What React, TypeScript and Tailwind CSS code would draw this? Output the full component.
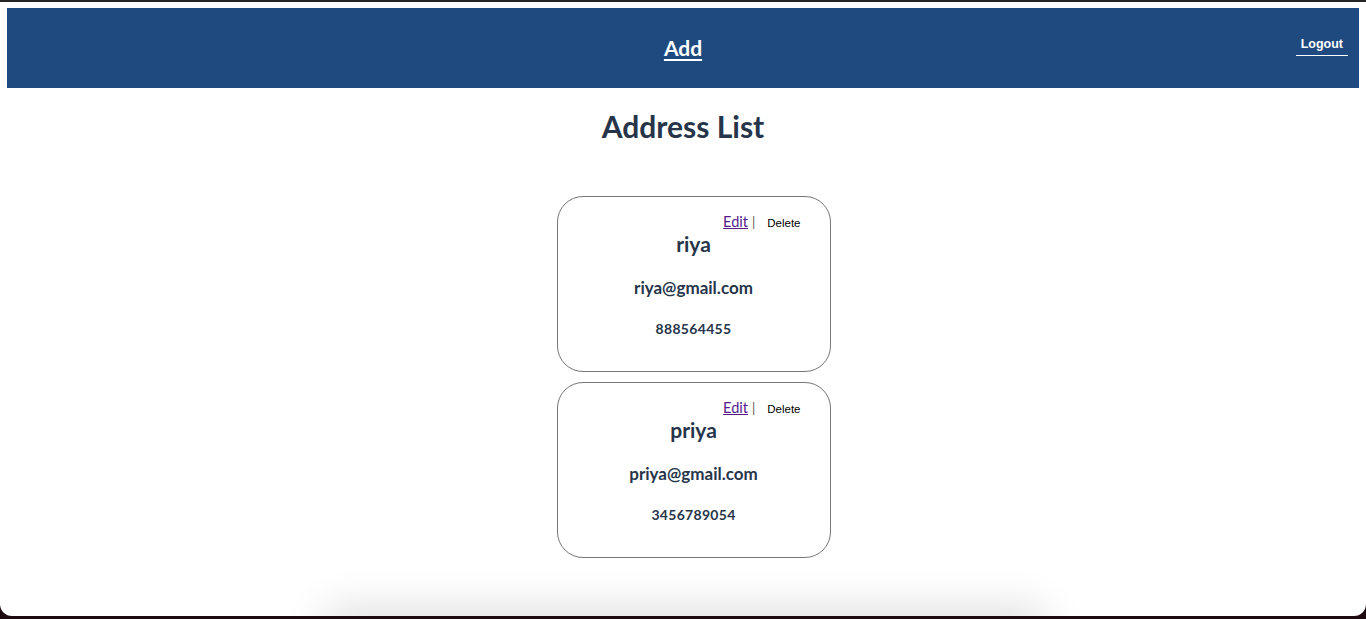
import React from "react";

const people = [
  { name: "riya", email: "riya@gmail.com", phone: "888564455" },
  { name: "priya", email: "priya@gmail.com", phone: "3456789054" },
];

function Card({ p }: { p: (typeof people)[number] }) {
  return (
    <div className="w-[274px] h-[176px] border border-[#767676] rounded-[26px] bg-white pt-[15px] flex flex-col items-center">
      <div className="w-full flex justify-end items-center pr-[29px] h-[20px]">
        <a href="#" className="text-[14.5px] text-[#551a8b] underline" style={{ fontFamily: "Lato, sans-serif" }}>
          Edit
        </a>
        <span className="text-[13px] text-[#555] ml-[4px] mr-[12px] leading-none" style={{ fontFamily: "Lato, sans-serif" }}>|</span>
        <button className="text-[11.5px] text-black mt-[3px]" style={{ fontFamily: "'Liberation Sans', Arial, sans-serif" }}>
          Delete
        </button>
      </div>
      <div className="h-[24px] leading-[24px] text-[21px] font-bold text-[#26354a]">{p.name}</div>
      <div className="mt-[20px] h-[24px] leading-[24px] text-[17px] font-bold text-[#26354a]">{p.email}</div>
      <div className="mt-[19px] h-[20px] leading-[20px] text-[14px] font-bold text-[#26354a] tracking-[0.3px]">{p.phone}</div>
    </div>
  );
}

export default function App() {
  return (
    <div className="w-[1366px] h-[619px] bg-[#1d0a10] overflow-hidden relative" style={{ fontFamily: "Lato, 'Noto Sans', sans-serif" }}>
      <div className="h-[2px] bg-[#242424]" />
      <div className="h-[614px] bg-white rounded-b-[12px] relative overflow-hidden">
        <div className="pt-[6px] px-[7px]">
          <header className="h-[80px] bg-[#1f4a80] flex items-center justify-center relative">
            <a href="#" className="text-white text-[21px] font-bold underline underline-offset-[3px]">
              Add
            </a>
            <button
              className="absolute right-[11px] top-[27px] text-white text-[12.5px] font-bold px-[5px] pb-[1px] border-b border-white"
              style={{ fontFamily: "'Liberation Sans', Arial, sans-serif" }}
            >
              Logout
            </button>
          </header>
        </div>
        <h1 className="text-center text-[30px] font-bold text-[#26354a] mt-[20px] leading-[36px]">Address List</h1>
        <div className="mt-[52px] flex flex-col items-center gap-[10px] pl-[21px]">
          {people.map((p) => (
            <Card key={p.name} p={p} />
          ))}
        </div>
        <div className="absolute left-[330px] w-[710px] bottom-[-30px] h-[30px] rounded-full shadow-[0_0_40px_10px_rgba(0,0,0,0.12)]" />
      </div>
    </div>
  );
}
